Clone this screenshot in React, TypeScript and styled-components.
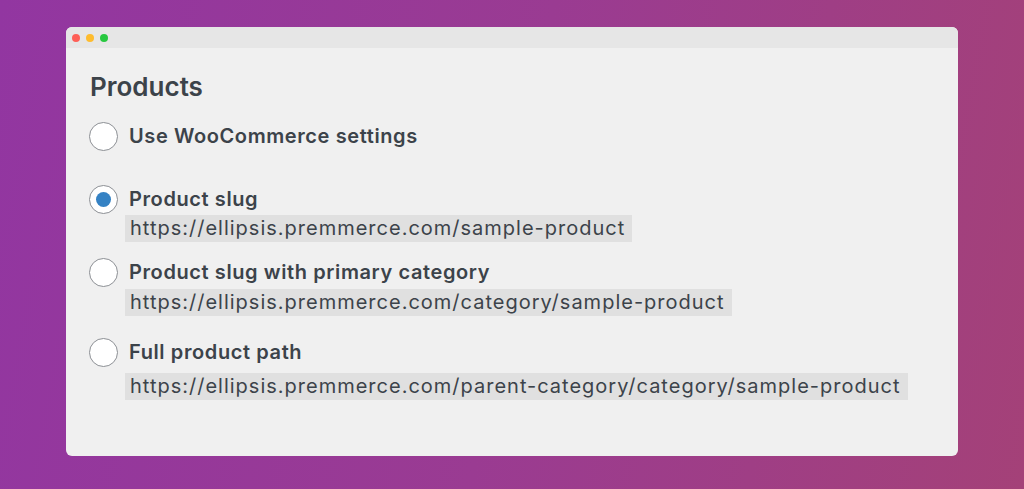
import styled, { createGlobalStyle } from "styled-components";

const GlobalStyle = createGlobalStyle`
  html, body {
    margin: 0;
    padding: 0;
  }
  body {
    font-family: Inter, "Noto Sans", sans-serif;
    color: #3c434a;
  }
`;

const Page = styled.div`
  box-sizing: border-box;
  width: 1024px;
  height: 489px;
  padding: 27px 66px 33px 66px;
  display: flex;
  background: linear-gradient(100deg, #9236a1 0%, #9a3b92 50%, #a44178 100%);
`;

const Window = styled.div`
  flex: 1;
  display: flex;
  flex-direction: column;
  background-color: #f0f0f0;
  border-radius: 6px;
  overflow: hidden;
`;

const TitleBar = styled.div`
  height: 21px;
  flex-shrink: 0;
  display: flex;
  align-items: center;
  gap: 6px;
  padding-left: 6px;
  background-color: #e6e6e6;
`;

const Dot = styled.span<{ $color: string }>`
  width: 8px;
  height: 8px;
  border-radius: 50%;
  background-color: ${(p) => p.$color};
`;

const Content = styled.div`
  padding: 22px 24px 0 23px;
`;

const Heading = styled.h2`
  margin: 0 0 17px 1px;
  font-size: 26px;
  line-height: 34px;
  font-weight: 600;
  color: #3c434a;
`;

const OptionList = styled.div`
  display: flex;
  flex-direction: column;
`;

const Option = styled.label<{ $space: number }>`
  display: flex;
  flex-direction: column;
  align-items: flex-start;
  margin-bottom: ${(p) => p.$space}px;
  cursor: pointer;
`;

const OptionRow = styled.span`
  display: flex;
  align-items: center;
  gap: 11px;
  height: 30px;
`;

const Radio = styled.span<{ $checked?: boolean }>`
  box-sizing: border-box;
  width: 29px;
  height: 29px;
  border-radius: 50%;
  border: 1.5px solid #8c8f94;
  background-color: #ffffff;
  display: flex;
  align-items: center;
  justify-content: center;

  &::after {
    content: "";
    width: 15px;
    height: 15px;
    border-radius: 50%;
    background-color: #3582c4;
    display: ${(p) => (p.$checked ? "block" : "none")};
  }
`;

const OptionLabel = styled.span`
  font-size: 20px;
  font-weight: 600;
  color: #3c434a;
  letter-spacing: 0.6px;
`;

const Url = styled.code<{ $offset: number }>`
  margin: ${(p) => p.$offset}px 0 0 36px;
  padding: 0 7px 0 5px;
  line-height: 27px;
  font-family: Inter, "Noto Sans", sans-serif;
  font-size: 20px;
  font-weight: 400;
  color: #3c434a;
  letter-spacing: 1px;
  background-color: #e0e0e0;
`;

const options = [
  { label: "Use WooCommerce settings", checked: false, space: 33 },
  {
    label: "Product slug",
    url: "https://ellipsis.premmerce.com/sample-product",
    offset: 1,
    checked: true,
    space: 15,
  },
  {
    label: "Product slug with primary category",
    url: "https://ellipsis.premmerce.com/category/sample-product ",
    offset: 2,
    checked: false,
    space: 21,
  },
  {
    label: "Full product path",
    url: "https://ellipsis.premmerce.com/parent-category/category/sample-product ",
    offset: 6,
    checked: false,
    space: 0,
  },
];

export default function App() {
  return (
    <>
      <GlobalStyle />
      <Page>
        <Window>
          <TitleBar>
            <Dot $color="#fe5f57" />
            <Dot $color="#febc2e" />
            <Dot $color="#28c840" />
          </TitleBar>
          <Content>
            <Heading>Products</Heading>
            <OptionList>
              {options.map((o) => (
                <Option key={o.label} $space={o.space}>
                  <OptionRow>
                    <Radio $checked={o.checked} />
                    <OptionLabel>{o.label}</OptionLabel>
                  </OptionRow>
                  {o.url && <Url $offset={o.offset ?? 0}>{o.url}</Url>}
                </Option>
              ))}
            </OptionList>
          </Content>
        </Window>
      </Page>
    </>
  );
}
